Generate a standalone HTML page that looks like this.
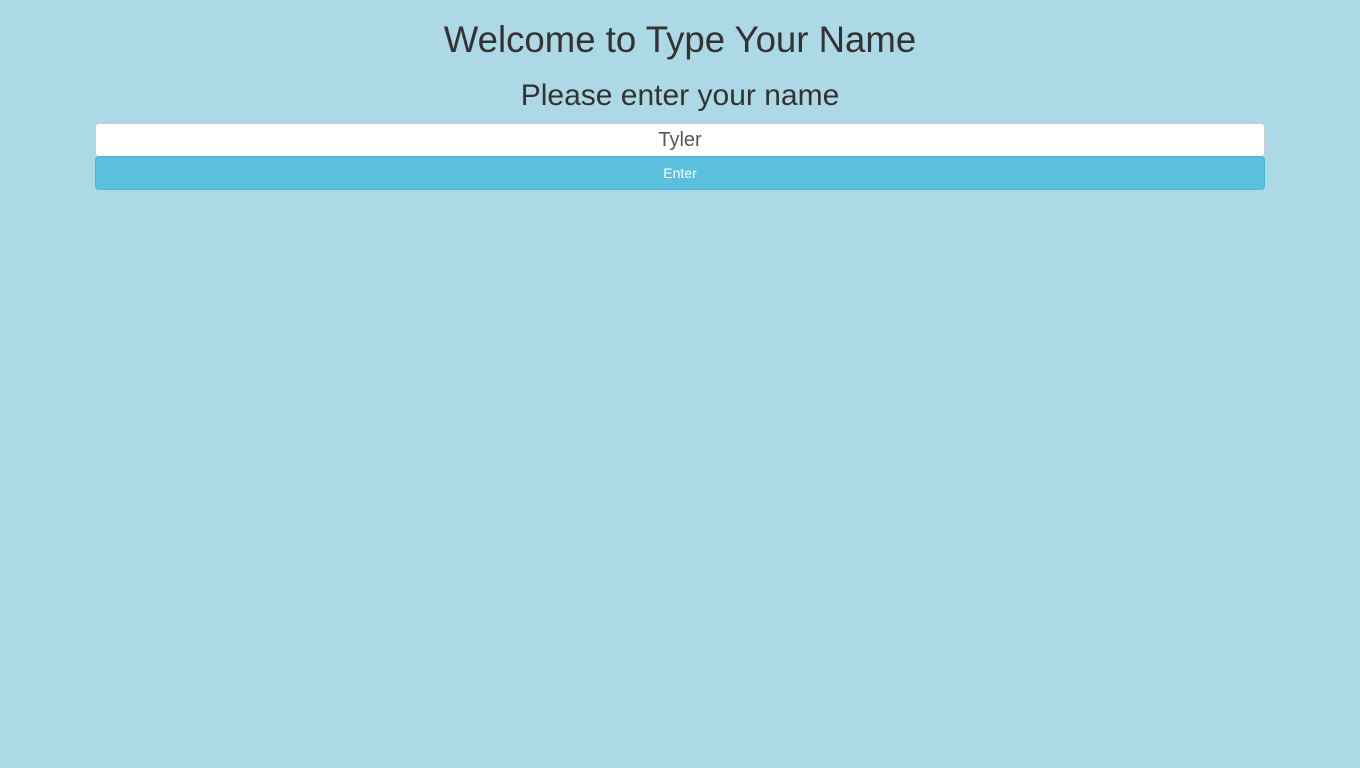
<!DOCTYPE html>
<html><head><style>
body{margin:0;background:#add8e6;font-family:"Liberation Sans",sans-serif;color:#333;width:1360px;height:768px;overflow:hidden}
h1{position:absolute;top:19px;left:0;width:1360px;text-align:center;margin:0;font-size:36.6px;font-weight:500;line-height:42px}
h2{position:absolute;top:78px;left:0;width:1360px;text-align:center;margin:0;font-size:30px;font-weight:500;line-height:36px}
.in{position:absolute;left:95px;top:123px;width:1168px;height:32px;background:#fff;border:1px solid #ccc;border-radius:4px;text-align:center;font-size:20px;line-height:32px;color:#555}
.bt{position:absolute;left:95px;top:156px;width:1168px;height:32px;background:#5bc0de;border:1px solid #46b8da;border-radius:4px;text-align:center;font-size:14px;line-height:32px;color:#fff}
</style></head><body>
<h1>Welcome to Type Your Name</h1>
<h2>Please enter your name</h2>
<div class="in">Tyler</div>
<div class="bt">Enter</div>
</body></html>
